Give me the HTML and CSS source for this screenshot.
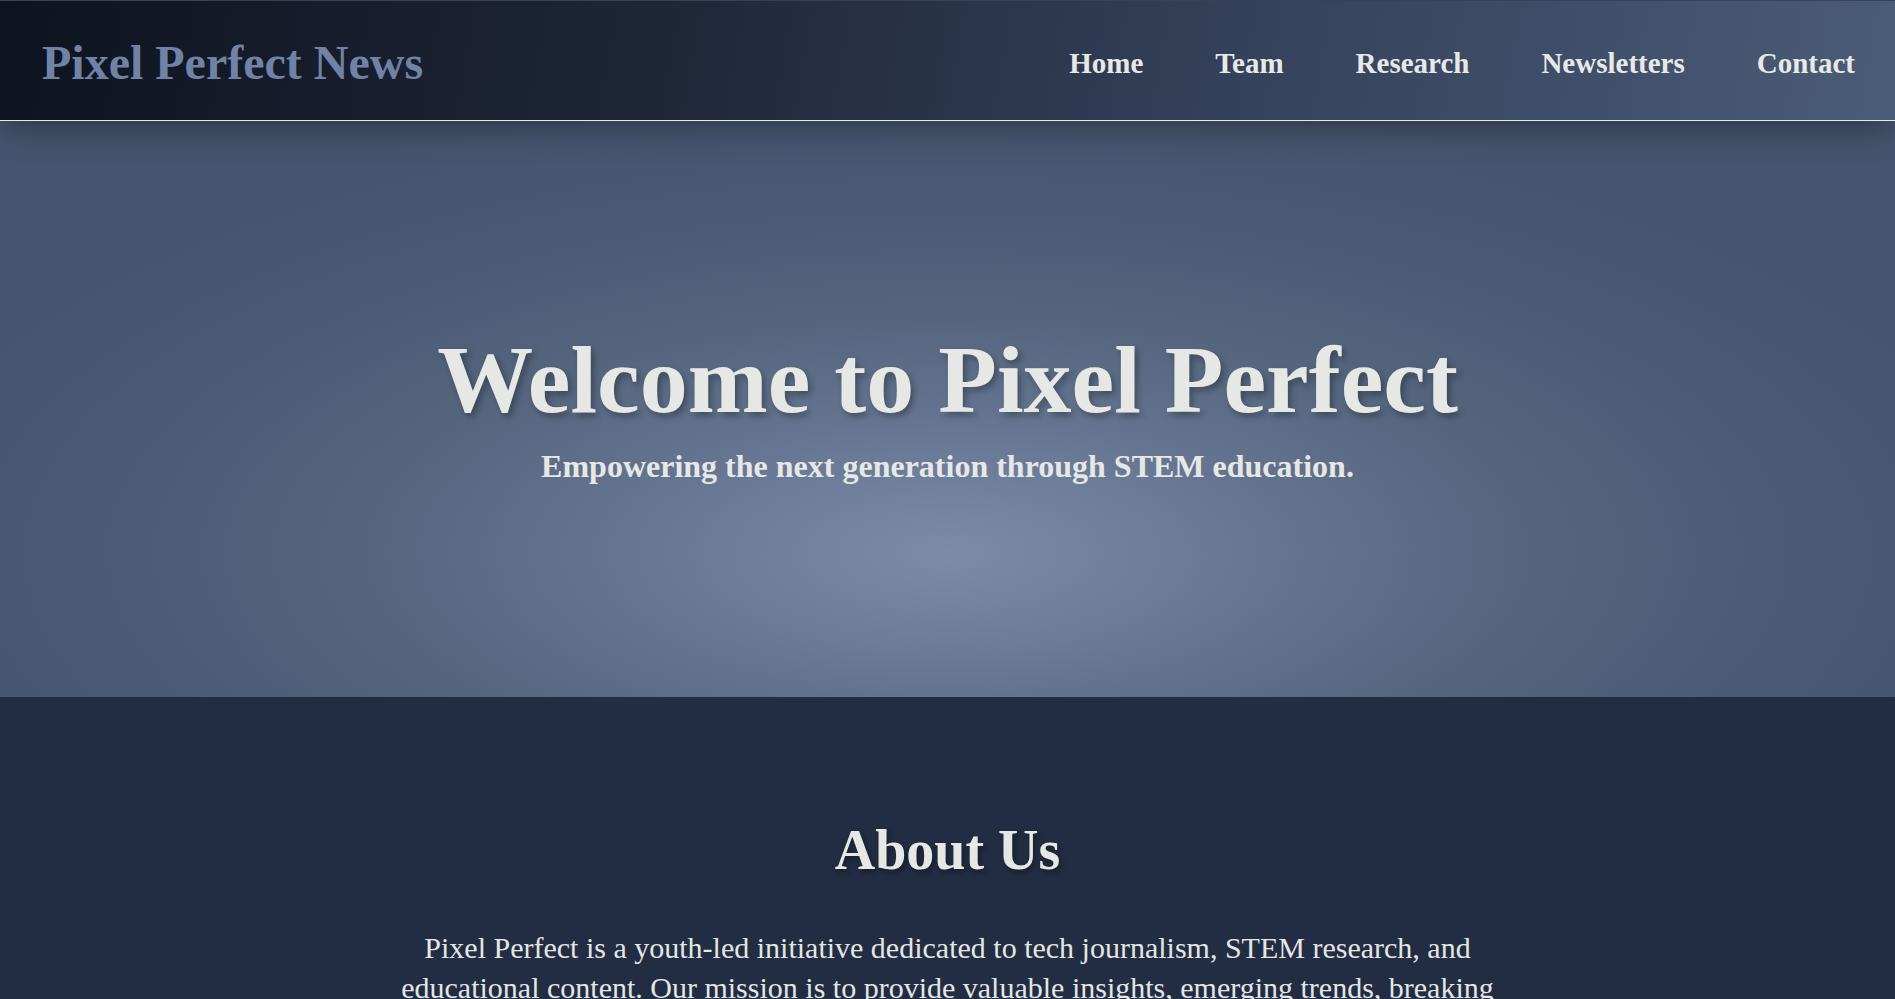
FILE: index.html
```html
<!DOCTYPE html>
<html lang="en">
<head>
<meta charset="utf-8">
<title>Pixel Perfect News</title>
<link rel="stylesheet" href="styles.css">
</head>
<body>
<header class="site-header">
  <a class="logo" href="#">Pixel Perfect News</a>
  <nav class="main-nav">
    <a href="#">Home</a>
    <a href="#">Team</a>
    <a href="#">Research</a>
    <a href="#">Newsletters</a>
    <a href="#">Contact</a>
  </nav>
</header>
<section class="hero">
  <h1 class="hero-title">Welcome to Pixel Perfect</h1>
  <p class="hero-sub">Empowering the next generation through STEM education.</p>
</section>
<section class="about">
  <h2 class="about-title">About Us</h2>
  <p class="about-text">Pixel Perfect is a youth-led initiative dedicated to tech journalism, STEM research, and educational content. Our mission is to provide valuable insights, emerging trends, breaking news, and in-depth analysis of the technology landscape for curious minds everywhere.</p>
</section>
</body>
</html>
```
FILE: styles.css
```css
* { box-sizing: border-box; }
html, body { margin: 0; padding: 0; }
body {
  font-family: "Liberation Serif", "Times New Roman", serif;
  background: #222c42;
  color: #e4e6e3;
  overflow: hidden;
}
a { text-decoration: none; color: inherit; }

.site-header {
  position: relative;
  z-index: 2;
  height: 121px;
  padding: 5px 40px 0 42px;
  display: flex;
  align-items: center;
  justify-content: space-between;
  background: linear-gradient(100deg, #0e131f 0%, #1f2638 35%, #34415a 65%, #4b5c77 100%);
  border-top: 1px solid #3a4152;
  border-bottom: 1px solid #e8eaec;
  box-shadow: 0 6px 30px rgba(0, 0, 0, 0.35);
}
.logo {
  font-size: 48px;
  font-weight: 700;
  line-height: 1.2;
  color: #7083a6;
}
.main-nav {
  display: flex;
  gap: 72px;
}
.main-nav a {
  font-size: 29px;
  font-weight: 700;
  line-height: 1.2;
  color: #e8e9e6;
}

.hero {
  position: relative;
  height: 576px;
  display: flex;
  flex-direction: column;
  align-items: center;
  justify-content: center;
  padding-bottom: 8px;
  background: radial-gradient(ellipse 60% 80% at 50% 75%, #7b8ba8 0%, #6a7a97 22%, #56667f 50%, #4a5a74 75%, #45546e 100%);
}
.hero-title {
  margin: 0;
  font-size: 96px;
  font-weight: 700;
  line-height: 1.2;
  color: #e6e8e5;
  text-shadow: 3px 4px 6px rgba(0, 0, 0, 0.3);
}
.hero-sub {
  margin: 7px 0 0;
  font-size: 32px;
  font-weight: 700;
  line-height: 1.4;
  color: #e6e8e5;
}

.about {
  padding: 120px 40px 80px;
  display: flex;
  flex-direction: column;
  align-items: center;
  background: #222c42;
}
.about-title {
  margin: 0 0 44px;
  font-size: 56px;
  font-weight: 700;
  line-height: 1.2;
  color: #e6e8e5;
  text-shadow: 2px 3px 5px rgba(0, 0, 0, 0.35);
}
.about-text {
  margin: 0;
  max-width: 1100px;
  font-size: 30px;
  line-height: 40px;
  text-align: center;
  color: #e4e6e3;
}
```
